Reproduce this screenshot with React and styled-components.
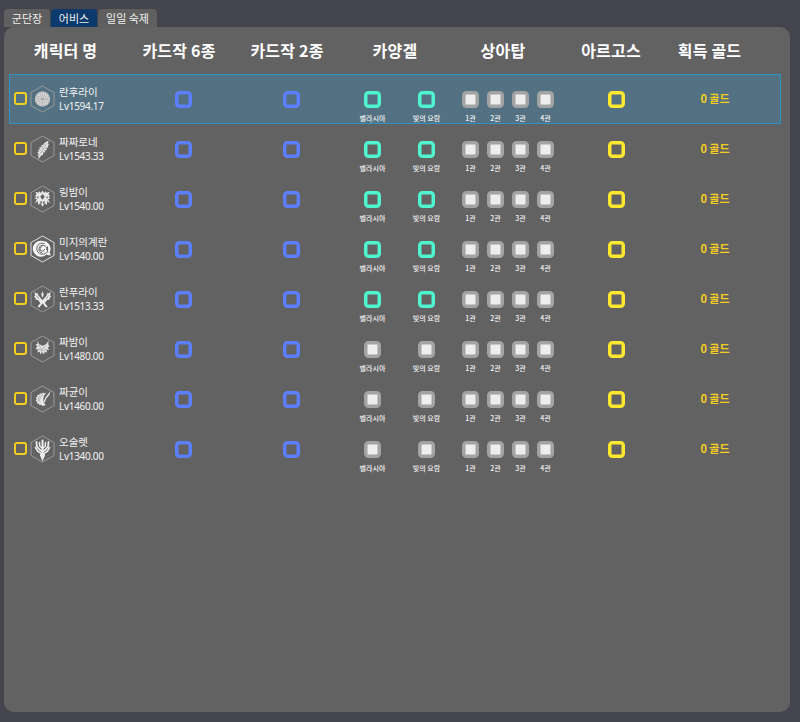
import React from "react";
import styled, { createGlobalStyle } from "styled-components";

const Global = createGlobalStyle`
  html, body { margin: 0; padding: 0; background: #44444f; }
  body { font-family: "Noto Sans CJK KR", "Noto Sans", sans-serif; }
`;
const Page = styled.div`
  box-sizing: border-box; width: 800px; height: 722px; padding: 9px 10px 10px 4px;
  display: flex; flex-direction: column; background: #44444f;
`;
const Tabs = styled.div`display: flex; gap: 1px; height: 18px;`;
const Tab = styled.div`
  width: ${p => p.$w}px; height: 18px; line-height: 18px; text-align: center; font-size: 11px;
  border-radius: 4px 4px 0 0; color: #f0f0f0;
  background: ${p => (p.$active ? "#0d3a6c" : "#5f5f5f")};
`;
const Panel = styled.div`
  flex: 1; background: #636263; border-radius: 10px; padding: 0 0 0 5px;
`;
const HeaderRow = styled.div`
  display: grid; grid-template-columns: 117px repeat(5, 108px) 89px; height: 47px; margin-left: -1px; align-items: center;
`;
const HeaderCell = styled.div`
  text-align: center; font-size: 16px; font-weight: 700; color: #fff; letter-spacing: 0.2px; padding-bottom: 1px;
  &:first-child { padding-right: 2px; }
`;
const Row = styled.div`
  box-sizing: border-box; width: 772px; height: 50px; display: grid;
  grid-template-columns: 119px 108px 108px 109px 108px 108px 90px;
  border: 1px solid ${p => (p.$active ? "#2f93c6" : "transparent")};
  background: ${p => (p.$active ? "#537182" : "transparent")};
`;
const CharCell = styled.div`display: flex; align-items: center; padding: 0 0 1px 4px;`;
const Pick = styled.div`
  box-sizing: border-box; width: 13px; height: 13px; border: 2px solid #f2cf1d; border-radius: 3px; margin-right: 3px; flex: none;
`;
const CharText = styled.div`margin-left: 4px; color: #f2f2f2; font-size: 10.5px; line-height: 14px; white-space: nowrap;`;
const Level = styled.div`font-family: "Noto Sans", sans-serif; font-size: 10px; letter-spacing: -0.3px;`;
const Center = styled.div`display: flex; align-items: center; justify-content: center;`;
const Box = styled.div`
  box-sizing: border-box; width: 17px; height: 17px; border-radius: 4.5px; flex: none;
  border: 3px solid ${p => p.$color}; background: ${p => p.$fill || "transparent"};
  box-shadow: inset 0 0 0 0.5px ${p => p.$color};
`;
const Group = styled.div`display: flex; justify-content: center; align-items: flex-start; padding-top: 15.5px;`;
const Item = styled.div`width: ${p => p.$w}px; display: flex; flex-direction: column; align-items: center;`;
const Label = styled.div`
  font-size: 7px; line-height: 10px; color: #f4f4f4; margin-top: 5.5px; white-space: nowrap; font-weight: 500;
`;
const Gold = styled(Center)`font-size: 11px; font-weight: 700; color: #f4cf1f; padding-bottom: 3px;`;

const noise = { fill: "none", stroke: "#636263", strokeWidth: 0.6 };
const emblems = [
  <g key="0">
    <circle cx="12.5" cy="14" r="7.6" fill="#dedede" />
    <circle cx="12.5" cy="14" r="6.6" {...noise} strokeDasharray="0.9 0.9" />
    <circle cx="12.5" cy="14" r="5.2" {...noise} strokeDasharray="0.8 1" />
    <circle cx="12.5" cy="14" r="3.8" {...noise} strokeDasharray="0.9 0.8" />
    <circle cx="12.5" cy="14" r="2.4" {...noise} strokeDasharray="0.7 0.8" />
    <circle cx="12.5" cy="14" r="1" {...noise} />
  </g>,
  <g key="1">
    <path fill="#e6e6e6" d="M18.500 5.500l-.4 3.400 1.100.8-1.600 1.200.8 1.500-2 .7.500 1.800-2 .5.300 1.900-2 .3-.2 2.300-1.900.5-1.300 2.400-1.500 1 .4-2.600-1.200-1 1.300-1.300-1.500-1.500 1.700-.8-1.100-1.700 2-.7-.6-1.800 2.200-.4-.2-1.800 2.300-.6.800-1.500z" />
    <path {...noise} strokeDasharray="1 .7" d="M16.800 8.500L9 20.500M14.500 9.500l-5 6.800M16.500 12l-4.500 5.500" />
  </g>,
  <g key="2">
    <path fill="#e8e8e8" d="M12.500 5.500l1.700 2.500 1.400-1.800 1 1.500 2.900-.9-1 3 1.800.7-1.700 1.300 1.900 1.700-2.400.4 2 4.500-2.900-2.300-.2 4-2.200-1.800-2.300 3.500-2.300-3.500-2.200 1.800-.2-4-2.900 2.300 2-4.500-2.400-.4 1.900-1.700-1.700-1.300 1.800-.7-1-3 2.900.9 1-1.500 1.400 1.800z" />
    <path fill="#636263" d="M12.500 9l2.300 2.700-2.300 3-2.300-3zM10 16.500l1.300 3.500.9-3.500zM15 16.500l-1.300 3.500-.9-3.500zM7.800 10.800l1 2.200-1.800.3zM17.200 10.800l-1 2.200 1.800.3z" />
  </g>,
  <g key="3">
    <path fill="#f5f5f5" d="M12.700 6a8 8 0 0 1 7 11.600l1.300 2.600h-3.300l-1-1A8 8 0 1 1 12.700 6z" />
    <path fill="none" stroke="#636263" strokeWidth="1" d="M14.500 8.500a5.600 5.600 0 1 0 2.500 8.300M16.500 15a3.800 3.800 0 1 0-4.500 2.800M12.200 11.600a2.300 2.300 0 1 0 2.400 2.500M17.500 11.500l.2 6" />
  </g>,
  <g key="4" fill="#eaeaea">
    <path d="M4.500 6.500l2 2.300.7-1.300 1.300 3 4 4.800 4-4.800 1.300-3 .7 1.300 2-2.300-.3 4.500 1.300.4-2 1.700.3 1.500-2.600.3-2.300 3 2.800 3.800-1.800.8-3.300-3.900-3.300 3.900-1.800-.8 2.800-3.800-2.300-3-2.600-.3.300-1.500-2-1.700 1.300-.4z" />
    <path d="M12.500 6l1.200 3.500-1.200 3.500-1.200-3.500z" />
    <path {...noise} d="M6.500 10.500l2.500 3.500M18.500 10.500l-2.500 3.500" />
  </g>,
  <g key="5">
    <path fill="#e0e0e0" d="M7.500 5.500l1.700 3.700 1.800.9 1.600.6 1.700-.6 2-1.200 2.200-3.300-.2 4 1.200 2.100-1.700.6 1.200 3-2.200-.5.300 3-2.300-1-.9 2.700-1.600-1.900-2 1.900-.4-2.700-2.500.6.500-3-2.500-.5 1.800-2.300-1.600-2.300 2-.6z" />
    <path {...noise} strokeDasharray="1 .7" d="M9 10l3 5 3.500-4.500M12 15l-.5 5M8 14l3 1.500M17 14.500l-3.500 1" />
  </g>,
  <g key="6">
    <path fill="#e8e8e8" d="M17 7.500a8 8 0 0 0-1.300 12.500l-3 1-1.800-1.500-1.200 1-.8-2-1.900.3.200-2.200-1.700-.8 1.300-1.700L5.600 12.500l1.800-.7-.1-2.100 2.100.3.500-1.900 1.700.8 1.400-1.500 1.700 1z" />
    <path fill="#e8e8e8" d="M20.500 6l-1.200 4-3 3.500-1.600 4.300-1-1.400 1.700-4z" />
    <path {...noise} d="M13 9.500a6 6 0 0 0-2.700 8M10.500 10.500a5 5 0 0 0-2 6" strokeDasharray="1.100 .6" />
  </g>,
  <g key="7" stroke="#ececec" fill="none" strokeLinecap="round">
    <path strokeWidth="2" d="M12.500 5.500v17" />
    <path strokeWidth="1.800" d="M6.500 7l.4 4.500L10 15l2.500 1.500L15 15l3.100-3.500.4-4.500" />
    <path strokeWidth="1.500" d="M9.500 7.500l.2 3.500 2.800 2.500 2.800-2.500.2-3.500" />
    <path strokeWidth="1.600" d="M5.500 12.500l2.300 4 3 1.500 1.700 3 1.700-3 3-1.500 2.300-4" />
    <path strokeWidth="2.200" d="M11 20l1.500 3.500L14 20" />
  </g>,
];

const Emblem = ({ index }) => (
  <svg width="25" height="28" viewBox="0 0 25 28" style={{ flex: "none" }}>
    <path d="M12.5 1L24 7.500v13L12.500 27 1 20.500v-13z" fill="none" stroke={index === 3 ? "#e0e0e0" : "#9a9a9a"} strokeWidth="1" />
    {emblems[index]}
  </svg>
);

const chars = [
  ["란후라이", "Lv1594.17", true],
  ["짜짜로네", "Lv1543.33", true],
  ["링밤이", "Lv1540.00", true],
  ["미지의계란", "Lv1540.00", true],
  ["란푸라이", "Lv1513.33", true],
  ["짜밤이", "Lv1480.00", false],
  ["짜균이", "Lv1460.00", false],
  ["오술렛", "Lv1340.00", false],
];
const heads = ["캐릭터 명", "카드작 6종", "카드작 2종", "카양겔", "상아탑", "아르고스", "획득 골드"];
const TEAL = "#4ef5cf", GRAY = "#a3a3a3", FILL = "#eeeeee";

export default function App() {
  return (
    <Page>
      <Global />
      <Tabs>
        <Tab $w={46}>군단장</Tab>
        <Tab $w={46} $active>어비스</Tab>
        <Tab $w={59}>일일 숙제</Tab>
      </Tabs>
      <Panel>
        <HeaderRow>{heads.map(h => <HeaderCell key={h}>{h}</HeaderCell>)}</HeaderRow>
        {chars.map(([name, lv, on], i) => (
          <Row key={name} $active={i === 0}>
            <CharCell>
              <Pick />
              <Emblem index={i} />
              <CharText>{name}<Level>{lv}</Level></CharText>
            </CharCell>
            <Center><Box $color="#5c7fff" /></Center>
            <Center><Box $color="#5c7fff" /></Center>
            <Group>
              {["벨라시아", "빛의 요람"].map(l => (
                <Item key={l} $w={54}>
                  <Box $color={on ? TEAL : GRAY} $fill={on ? undefined : FILL} />
                  <Label>{l}</Label>
                </Item>
              ))}
            </Group>
            <Group>
              {["1관", "2관", "3관", "4관"].map(l => (
                <Item key={l} $w={25}>
                  <Box $color={GRAY} $fill={FILL} />
                  <Label>{l}</Label>
                </Item>
              ))}
            </Group>
            <Center><Box $color="#ffe92e" /></Center>
            <Gold>0 골드</Gold>
          </Row>
        ))}
      </Panel>
    </Page>
  );
}
